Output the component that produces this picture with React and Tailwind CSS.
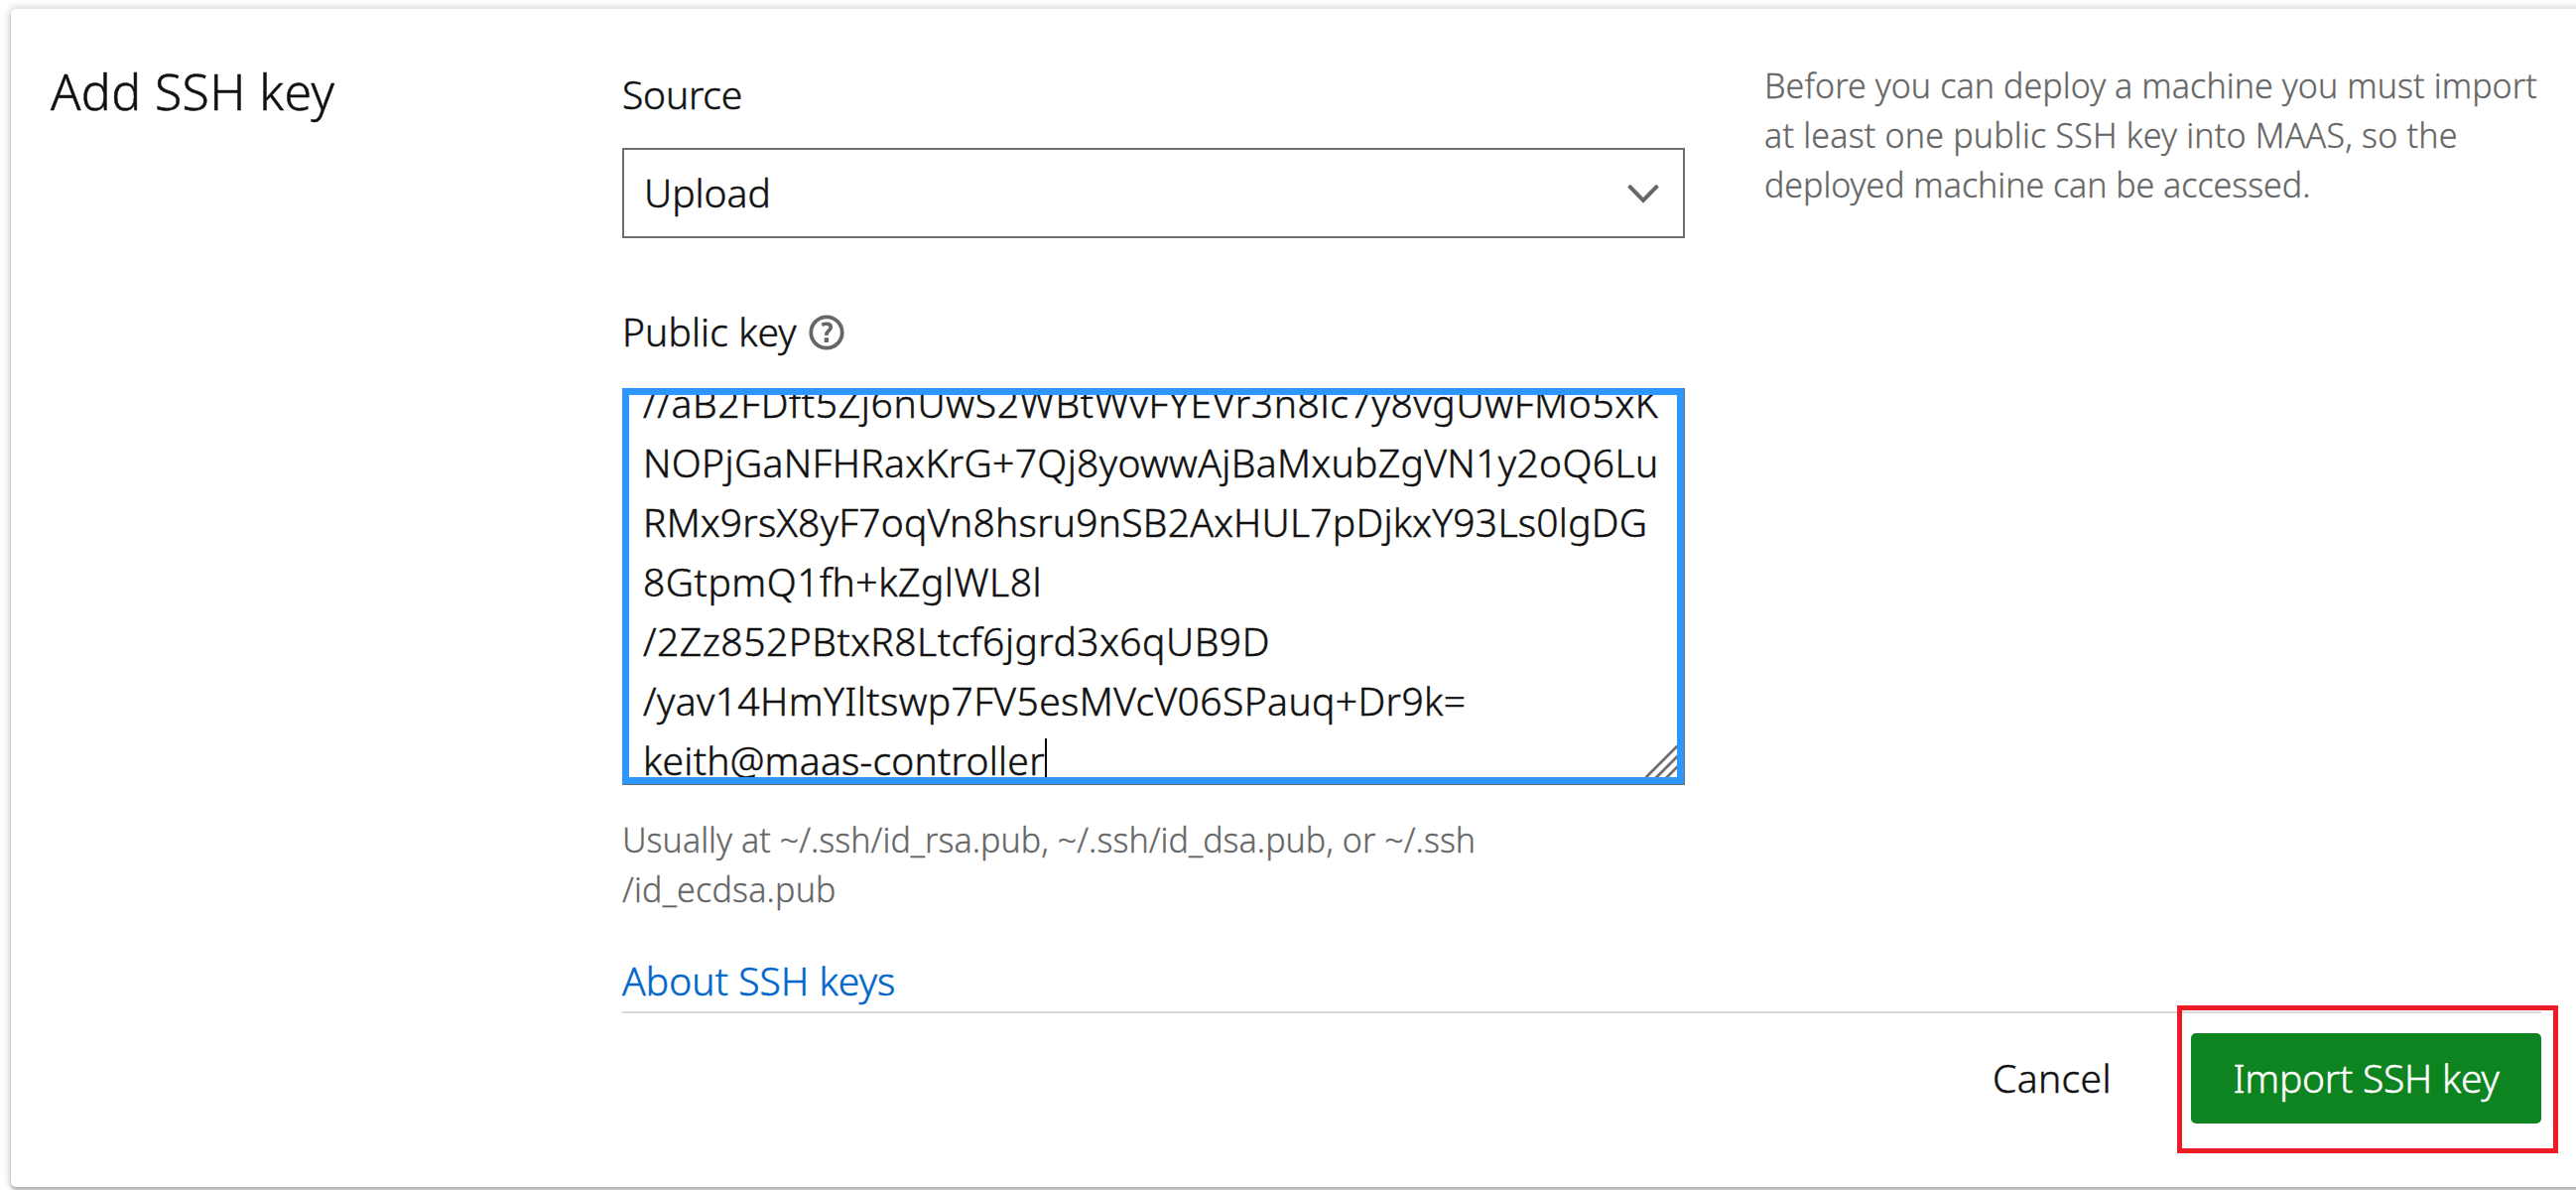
const hintLines = [
  { text: "Before you can deploy a machine you must import", tracking: "tracking-[0.08px]" },
  { text: "at least one public SSH key into MAAS, so the", tracking: "tracking-[0.19px]" },
  { text: "deployed machine can be accessed.", tracking: "tracking-[-0.04px]" },
];

const keyLines = [
  { text: "//aB2FDft5Zj6nUwS2WBtWvFYEVr3n8lc7y8vgUwFMo5xK", tracking: "tracking-[0.68px]" },
  { text: "NOPjGaNFHRaxKrG+7Qj8yowwAjBaMxubZgVN1y2oQ6Lu", tracking: "tracking-[0.37px]" },
  { text: "RMx9rsX8yF7oqVn8hsru9nSB2AxHUL7pDjkxY93Ls0lgDG", tracking: "tracking-[0.25px]" },
  { text: "8GtpmQ1fh+kZglWL8l", tracking: "tracking-[0.54px]" },
  { text: "/2Zz852PBtxR8Ltcf6jgrd3x6qUB9D", tracking: "tracking-[0.52px]" },
  { text: "/yav14HmYIltswp7FV5esMVcV06SPauq+Dr9k=", tracking: "tracking-[0.41px]" },
  { text: "keith@maas-controller", tracking: "tracking-[0.26px]" },
];

function ChevronIcon() {
  return (
    <svg className="h-5 w-8" viewBox="0 0 32 20" fill="none" stroke="#666" strokeWidth="4">
      <path d="M1.6 2.2 16 16.8 30.4 2.2" />
    </svg>
  );
}

function HelpIcon() {
  return (
    <svg className="mt-0.5 size-9" viewBox="0 0 36 36" fill="none" stroke="#666">
      <circle cx="18" cy="18" r="15.7" strokeWidth="3.8" />
      <path d="M13.2 10.3c1.5-.7 3-1 4.6-1 2.9 0 4.5 1.3 4.5 3.4 0 3.3-4.5 3.8-4.5 7.8v.6" strokeWidth="3.6" />
      <rect x="15.700" y="23.200" width="4.400" height="4.800" rx="1" fill="#666" stroke="none" />
    </svg>
  );
}

function ResizeHandle() {
  return (
    <svg className="absolute right-0 bottom-0 size-8" viewBox="0 0 32 32" stroke="#6e6e6e" strokeWidth="2.800">
      <path d="M0 33 33 0M10.500 33 33 10.500M21 33 33 21" />
    </svg>
  );
}

export default function App() {
  return (
    <div className="h-[1199px] w-full overflow-hidden bg-white pt-[9px] pl-[11px] font-['Noto_Sans',sans-serif] text-[39px] leading-[60px] font-light text-[#111] [-webkit-text-stroke:0.5px]">
      <section className="flex h-[1187px] w-[2620px] rounded-[5px] bg-white pl-10 shadow-[0_0_9px_1px_rgba(0,0,0,0.2),0_3px_3px_0_rgba(0,0,0,0.22)]">
        <h1 className="w-[576px] shrink-0 pt-[50px] text-[50px] leading-[66px] tracking-[0.4px]">Add SSH key</h1>

        <form className="w-[1934px] shrink-0 pt-14">
          <div className="flex">
            <div className="w-[1071px]">
              <label className="block tracking-[-0.2px]">Source</label>
              <div className="mt-6 flex h-[91px] items-center justify-between border-2 border-[#6e6e6e] pr-6 pl-5">
                <span className="pb-px">Upload</span>
                <ChevronIcon />
              </div>

              <div className="mt-16 flex items-center gap-3">
                <label className="tracking-[0.1px]">Public key</label>
                <HelpIcon />
              </div>
              <div className="mt-[27px] h-[400px] border-r border-b border-[#6e6e6e]">
                <div className="relative h-full overflow-hidden border-[7px] border-[#2e96ff] pl-3.5">
                  <div className="-mt-[22px] whitespace-nowrap">
                    {keyLines.map((line, i) => (
                      <div key={line.text} className={`flex h-[60px] ${line.tracking}`}>
                        {line.text}
                        {i === keyLines.length - 1 && <span className="mt-2 h-12 w-0.5 bg-black" />}
                      </div>
                    ))}
                  </div>
                  <ResizeHandle />
                </div>
              </div>

              <p className="mt-[30px] text-[34px] leading-[50px] text-[#666] [-webkit-text-stroke:0.3px]">
                <span className="block tracking-[0.04px]">Usually at ~/.ssh/id_rsa.pub, ~/.ssh/id_dsa.pub, or ~/.ssh</span>
                <span className="block tracking-[0.2px]">/id_ecdsa.pub</span>
              </p>
              <a className="mt-[37px] block tracking-[0.08px] text-[#06c]">About SSH keys</a>
            </div>

            <p className="-mt-1 ml-20 text-[34px] leading-[50px] whitespace-nowrap text-[#666] [-webkit-text-stroke:0.3px]">
              {hintLines.map((line) => (
                <span key={line.text} className={`block ${line.tracking}`}>
                  {line.text}
                </span>
              ))}
            </p>
          </div>

          <div className="mt-px flex justify-end border-t-2 border-[#d9d9d9] pt-5">
            <button type="button" className="mr-[38px] h-[91px] px-[42px] pb-px tracking-[0.4px]">
              Cancel
            </button>
            <div className="relative">
              <button type="button" className="h-[91px] w-[353px] rounded-[5px] bg-[#0e8420] pb-px tracking-[-0.23px] text-white">
                Import SSH key
              </button>
              <div className="absolute -top-7 -right-[17px] -bottom-[30px] -left-[14px] border-5 border-[#ed1c24]" />
            </div>
          </div>
        </form>
      </section>
    </div>
  );
}
